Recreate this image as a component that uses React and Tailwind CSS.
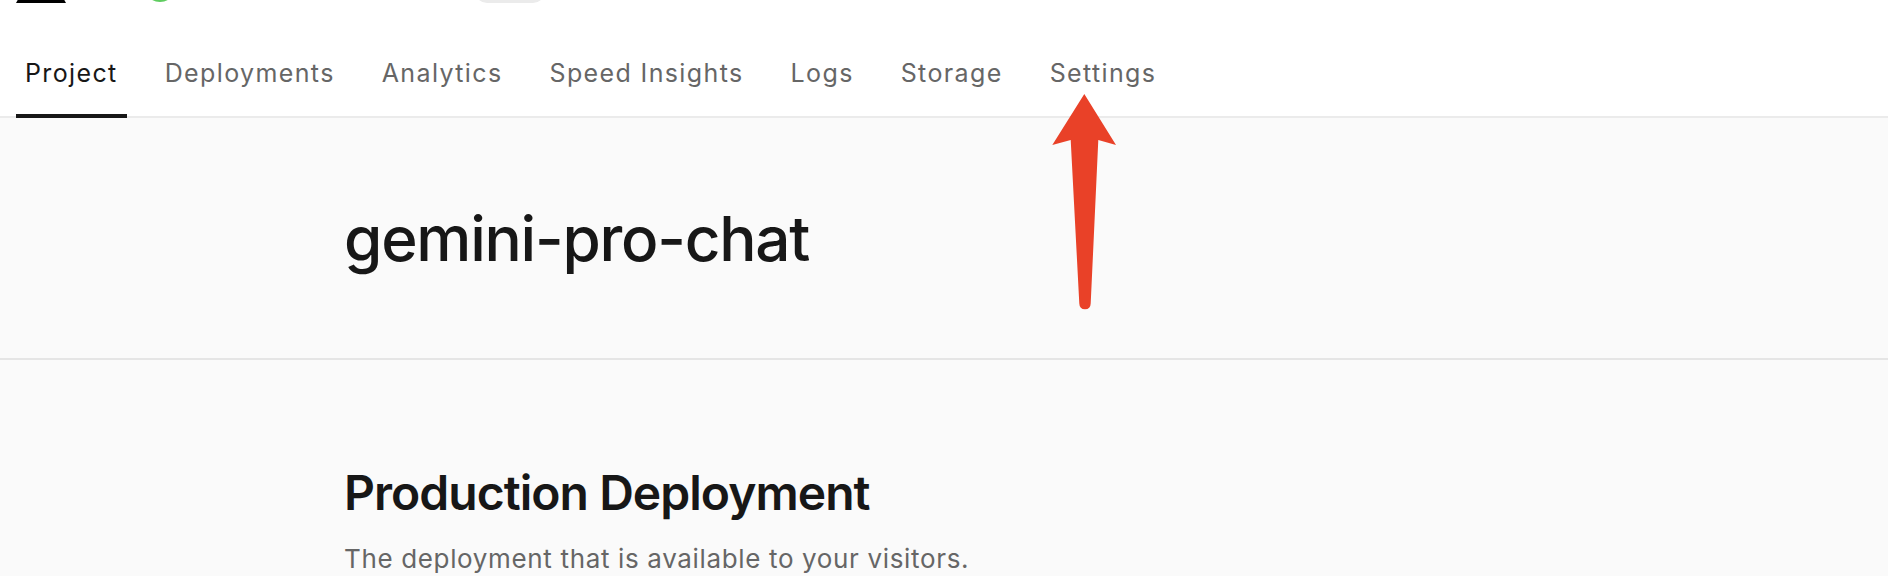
import React from "react";

const tabs = ["Project", "Deployments", "Analytics", "Speed Insights", "Logs", "Storage", "Settings"];

function Arrow() {
  return (
    <svg
      className="absolute left-[1050px] top-[90px]"
      width="70"
      height="222"
      viewBox="0 0 70 222"
    >
      <path
        d="M34.3 4 L66 55 L48.3 50 L40.7 213.5 Q40.5 219.3 35 219.3 Q29.5 219.3 29.3 213.5 L20.7 50 L2.3 55 Z"
        fill="#e94128"
      />
    </svg>
  );
}

export default function App() {
  return (
    <div
      className="relative min-h-[576px] w-full overflow-hidden bg-[#fafafa]"
      style={{ fontFamily: "Inter, 'Noto Sans', 'Liberation Sans', sans-serif" }}
    >
      <div className="bg-white">
        {/* top header, scrolled almost out of view */}
        <div className="flex h-[3px] items-end overflow-hidden pl-[16px]">
          <svg width="50" height="44" viewBox="0 0 50 44" className="shrink-0">
            <path d="M25 0 L50 44 L0 44 Z" fill="#000" />
          </svg>
          <div className="mb-[1px] ml-[78px] h-[32px] w-[32px] shrink-0 rounded-full bg-gradient-to-b from-[#8fe36f] to-[#5ccb5f]" />
          <div className="mb-[0.5px] ml-[299px] h-[24px] w-[70px] shrink-0 rounded-full bg-[#ebebeb]" />
        </div>

        {/* tabs */}
        <nav className="flex gap-[29px] pl-[16px] shadow-[inset_0_-2px_0_#ebebeb]">
          {tabs.map((t, i) => (
            <div
              key={t}
              className={
                "border-b-4 px-[9px] pb-[26px] pt-[56px] text-[25px] leading-[29px] tracking-[0.055em] " +
                (i === 0 ? "border-[#171717] text-[#171717]" : "border-transparent text-[#666666]")
              }
            >
              {t}
            </div>
          ))}
        </nav>
      </div>

      {/* hero */}
      <section className="border-b-2 border-[#e5e5e5] bg-[#fafafa]">
        <div className="mx-auto w-[1200px] pb-[82px] pt-[83px]">
          <h1 className="text-[62px] font-medium leading-[75px] tracking-[-0.02em] text-[#171717]">
            gemini-pro-chat
          </h1>
        </div>
      </section>

      {/* production deployment */}
      <section className="bg-[#fafafa]">
        <div className="mx-auto w-[1200px] pt-[104px]">
          <h2 className="text-[48px] font-semibold leading-[57px] tracking-[-0.02em] text-[#171717]">
            Production Deployment
          </h2>
          <p className="mt-[22px] text-[26px] leading-[32px] tracking-[0.025em] text-[#666666]">
            The deployment that is available to your visitors.
          </p>
        </div>
      </section>

      <Arrow />
    </div>
  );
}
